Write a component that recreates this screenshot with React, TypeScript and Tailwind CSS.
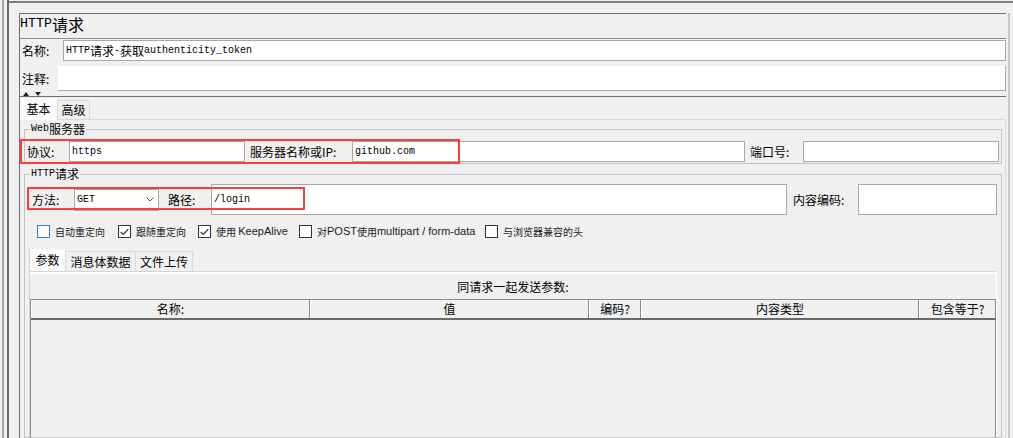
import React from "react";

// JMeter "HTTP请求" sampler panel, Windows Swing look
const mono = "font-['Liberation_Mono',monospace]";

function Check({ checked, focus }: { checked?: boolean; focus?: boolean }) {
  return (
    <span
      className={`w-[13px] h-[13px] shrink-0 border bg-white flex items-center justify-center ${
        focus ? "border-[#3d7fbd]" : "border-[#333333]"
      }`}
    >
      {checked && (
        <svg width="9" height="8" viewBox="0 0 9 8">
          <path d="M0.8 4 L3.3 6.5 L8.3 1.2" fill="none" stroke="#333333" strokeWidth="1.2" />
        </svg>
      )}
    </span>
  );
}

function Opt({ w, checked, focus, children }: { w: string; checked?: boolean; focus?: boolean; children: React.ReactNode }) {
  return (
    <div className={`${w} flex items-center shrink-0`}>
      <Check checked={checked} focus={focus} />
      <span className="ml-[5px] flex items-center leading-none text-[10px] text-[#1a1a1a]">{children}</span>
    </div>
  );
}

const Latin = ({ children }: { children: React.ReactNode }) => (
  <span className="font-['Liberation_Sans',sans-serif] text-[11px]">{children}</span>
);

export default function App() {
  return (
    <div className="w-[1013px] h-[438px] overflow-hidden bg-[#f0f0f0] flex text-[12px] text-black font-['Noto_Sans_CJK_SC',sans-serif]">
      {/* left splitter */}
      <div className="w-[9px] shrink-0 flex">
        <div className="ml-[2px] w-[2px] bg-[#a3a3a3]" />
        <div className="ml-[3px] w-[2px] bg-[#6a6a6a]" />
      </div>

      <div className="w-[1004px] mt-[1px] border-t-2 border-[#7d7d7d] flex pt-[10px] pl-[10px]">
        <div className="w-[987px] border-l border-t border-[#6f6f6f] flex flex-col">
          {/* title */}
          <div className="h-[25px] border-b border-[#8c8c8c] flex items-center pb-[4px] leading-none">
            <span className={`${mono} text-[13.3px]`}>HTTP</span>
            <span className="text-[16px]">请求</span>
          </div>

          {/* name */}
          <div className="h-[23px] flex items-start pt-[1px]">
            <div className="w-[43px] pl-[2px] self-center leading-none">名称:</div>
            <div className="flex-1 h-[21px] bg-white border border-[#a8a8a8] flex items-center pl-[2px] leading-none">
              <span className={`${mono} text-[10px]`}>HTTP</span>
              <span>请求</span>
              <span className={`${mono} text-[10px]`}>-</span>
              <span>获取</span>
              <span className={`${mono} text-[10px]`}>authenticity_token</span>
            </div>
          </div>

          {/* comment */}
          <div className="h-[29px] flex items-start pt-[4px]">
            <div className="w-[38px] pl-[2px] self-center leading-none">注释:</div>
            <div className="flex-1 h-[25px] bg-white border-b border-r border-[#a8a8a8]" />
          </div>

          {/* splitter arrows */}
          <div className="h-[5px] pl-[2px] flex items-end">
            <svg width="20" height="5" viewBox="0 0 20 5">
              <polygon points="1,5 4,1 7,5" fill="#222" />
              <polygon points="13,1 19,1 16,5" fill="#222" />
            </svg>
          </div>

          {/* tabs */}
          <div className="flex-1 border-t border-[#6f6f6f] flex flex-col">
            <div className="h-[23px] flex items-end border-b border-[#d9d9d9]">
              <div className="w-[37px] h-[22px] -mb-[1px] bg-[#fbfbfb] flex items-center justify-center leading-none">基本</div>
              <div className="w-[33px] h-[19px] border border-b-0 border-[#d9d9d9] flex items-center justify-center leading-none">高级</div>
            </div>

            <div className="flex-1 border-r border-[#dadada] pl-[4px] pr-[3px] flex flex-col">
              {/* Web server */}
              <fieldset className="mt-[2px] border border-[#c2c2c2] pt-[5px] pb-[1px]">
                <legend className="ml-[5px] px-[1px] h-[14px] leading-[14px] flex items-center">
                  <span className={`${mono} text-[10px]`}>Web</span>
                  <span>服务器</span>
                </legend>
                <div className="relative h-[21px] flex items-center">
                  <div className="w-[44px] pl-[2px] leading-none">协议:</div>
                  <div className={`w-[176px] h-[21px] bg-white border border-[#a8a8a8] flex items-center pl-[2px] ${mono} text-[10px]`}>https</div>
                  <div className="w-[107px] pl-[5px] leading-none">服务器名称或IP:</div>
                  <div className={`w-[393px] h-[21px] bg-white border border-[#a8a8a8] flex items-center pl-[2px] ${mono} text-[10px]`}>github.com</div>
                  <div className="w-[58px] pl-[5px] leading-none">端口号:</div>
                  <div className="w-[196px] h-[21px] bg-white border border-[#a8a8a8]" />
                  <div className="absolute -left-[5px] -top-[2px] w-[440px] h-[25px] border-2 border-[#ff3b3b]" />
                </div>
              </fieldset>

              {/* HTTP request */}
              <fieldset className="mt-[3px] flex-1 border border-[#c2c2c2] pt-[3px] flex flex-col">
                <legend className="ml-[5px] px-[1px] h-[14px] leading-[14px] flex items-center">
                  <span className={`${mono} text-[10px]`}>HTTP</span>
                  <span>请求</span>
                </legend>
                <div className="relative h-[31px] flex items-center">
                  <div className="w-[49px] pl-[7px] leading-none">方法:</div>
                  <div className="w-[85px] h-[22px] bg-white border border-[#a8a8a8] flex items-center pl-[2px]">
                    <span className={`${mono} text-[10px]`}>GET</span>
                    <svg className="ml-auto mr-[4px]" width="8" height="5" viewBox="0 0 8 5">
                      <path d="M0.5 0.5 L4 4 L7.5 0.5" fill="none" stroke="#5a5a5a" strokeWidth="1" />
                    </svg>
                  </div>
                  <div className="w-[52px] pl-[9px] leading-none">路径:</div>
                  <div className={`w-[576px] h-[31px] bg-white border border-[#a8a8a8] flex items-center pl-[2px] ${mono} text-[10px]`}>/login</div>
                  <div className="w-[71px] pl-[6px] leading-none">内容编码:</div>
                  <div className="w-[139px] h-[31px] bg-white border border-[#a8a8a8]" />
                  <div className="absolute left-[2px] top-[3px] w-[278px] h-[23px] border-2 border-[#ff3b3b]" />
                </div>

                {/* options */}
                <div className="mt-[10px] h-[13px] pl-[12px] flex items-center">
                  <Opt w="w-[81px]" focus>自动重定向</Opt>
                  <Opt w="w-[80px]" checked>跟随重定向</Opt>
                  <Opt w="w-[101px]" checked>
                    使用&nbsp;<Latin>KeepAlive</Latin>
                  </Opt>
                  <Opt w="w-[186px]">
                    对<Latin>POST</Latin>使用<Latin>multipart / form-data</Latin>
                  </Opt>
                  <Opt w="w-[120px]">与浏览器兼容的头</Opt>
                </div>

                {/* sub tabs */}
                <div className="mt-[11px] ml-[4px] mr-[4px] flex-1 flex flex-col">
                  <div className="h-[22px] flex items-end">
                    <div className="w-[36px] h-[22px] bg-[#fbfbfb] border-l border-[#d0d0d0] flex items-center justify-center leading-none">参数</div>
                    <div className="w-[71px] h-[20px] border border-b-0 border-[#d9d9d9] flex items-center justify-center leading-none">消息体数据</div>
                    <div className="w-[57px] h-[20px] border border-b-0 border-l-0 border-[#d9d9d9] flex items-center justify-center leading-none">文件上传</div>
                  </div>
                  <div className="flex-1 border border-b-0 border-[#d4d4d4] border-r-white flex flex-col">
                    <div className="h-[2px] bg-white" />
                    <div className="h-[25px] flex items-center justify-center leading-none">同请求一起发送参数:</div>
                    <div className="flex-1 border-l border-r border-[#8a8a8a] flex flex-col">
                      <div className="h-[21px] border-t border-[#8a8a8a] border-b-2 border-b-[#6a6a6a] flex leading-none">
                        <div className="w-[279px] border-l border-r border-l-white border-r-[#8a8a8a] flex items-center justify-center">名称:</div>
                        <div className="w-[279px] border-l border-r border-l-white border-r-[#8a8a8a] flex items-center justify-center">值</div>
                        <div className="w-[52px] border-l border-r border-l-white border-r-[#8a8a8a] flex items-center justify-center">编码?</div>
                        <div className="w-[278px] border-l border-r border-l-white border-r-[#8a8a8a] flex items-center justify-center">内容类型</div>
                        <div className="w-[76px] border-l border-l-white flex items-center justify-center">包含等于?</div>
                      </div>
                    </div>
                  </div>
                </div>
              </fieldset>
            </div>
          </div>
        </div>

        {/* right edge */}
        <div className="w-[7px] flex">
          <div className="ml-[2px] w-[2px] bg-[#c6c6c6]" />
        </div>
      </div>
    </div>
  );
}
